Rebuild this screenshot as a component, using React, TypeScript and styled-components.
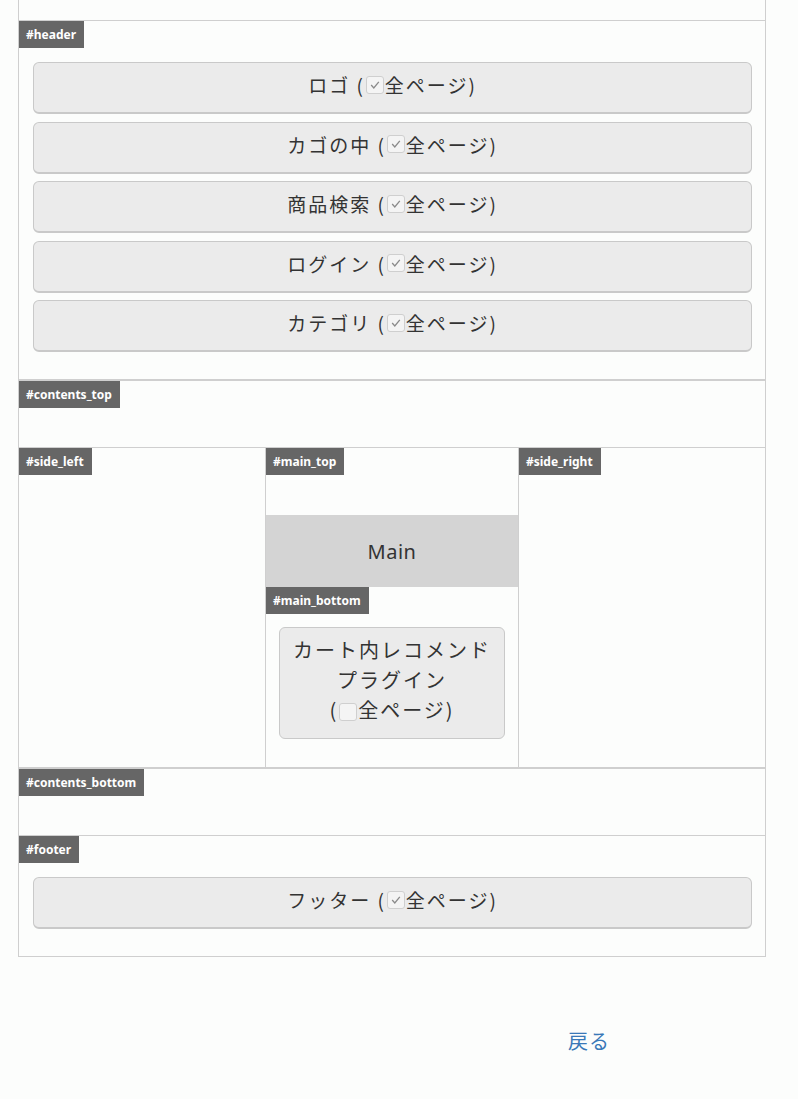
import React from "react";
import styled, { createGlobalStyle } from "styled-components";

const GlobalStyle = createGlobalStyle`
  body {
    margin: 0;
    background: #fcfdfc;
    font-family: "Noto Sans CJK JP", "Noto Sans", sans-serif;
    color: #333;
  }
`;

type Block = { name: string; all: boolean };

const headerBlocks: Block[] = [
  { name: "ロゴ", all: true },
  { name: "カゴの中", all: true },
  { name: "商品検索", all: true },
  { name: "ログイン", all: true },
  { name: "カテゴリ", all: true },
];

const Check: React.FC<{ checked: boolean }> = ({ checked }) => (
  <CheckBox>
    {checked && (
      <svg width="12" height="12" viewBox="0 0 12 12">
        <path d="M2.2 6 L4.8 9 L9.8 2.8" fill="none" stroke="#8a8a8a" strokeWidth="1.3" />
      </svg>
    )}
  </CheckBox>
);

const BlockItem: React.FC<{ block: Block }> = ({ block }) => (
  <BlockButton>
    {block.name} (<Check checked={block.all} />全ページ)
  </BlockButton>
);

const App: React.FC = () => {
  return (
    <>
      <GlobalStyle />
      <Layout>
        <TopRest />
        <Section $thick>
          <Label>#header</Label>
          <BlockList>
            {headerBlocks.map((b) => (
              <BlockItem key={b.name} block={b} />
            ))}
          </BlockList>
        </Section>
        <Section $empty>
          <Label>#contents_top</Label>
        </Section>
        <Columns>
          <Column>
            <Label>#side_left</Label>
          </Column>
          <Column $main>
            <Label>#main_top</Label>
            <MainSpacer />
            <MainBlock>Main</MainBlock>
            <Label>#main_bottom</Label>
            <SmallList>
              <BlockButton $small>
                カート内レコメンドプラグイン
                <br />(<Check checked={false} />全ページ)
              </BlockButton>
            </SmallList>
          </Column>
          <Column>
            <Label>#side_right</Label>
          </Column>
        </Columns>
        <Section $empty>
          <Label>#contents_bottom</Label>
        </Section>
        <Section $last>
          <Label>#footer</Label>
          <BlockList>
            <BlockItem block={{ name: "フッター", all: true }} />
          </BlockList>
        </Section>
      </Layout>
      <BackRow>
        <BackLink href="#">戻る</BackLink>
      </BackRow>
    </>
  );
};

export default App;

const Layout = styled.div`
  margin-left: 18px;
  width: 748px;
  border-left: 1px solid #cfcfcf;
  border-right: 1px solid #cfcfcf;
  border-bottom: 1px solid #cfcfcf;
  box-sizing: border-box;
`;

const TopRest = styled.div`
  height: 20px;
  border-bottom: 1px solid #cfcfcf;
`;

const Section = styled.div<{ $thick?: boolean; $empty?: boolean; $last?: boolean }>`
  border-bottom: ${(p) => (p.$thick ? "2px" : p.$last ? "0" : "1px")} solid #cfcfcf;
  min-height: ${(p) => (p.$empty ? "66px" : "0")};
`;

const Label = styled.div`
  display: inline-block;
  vertical-align: top;
  height: 27px;
  line-height: 27px;
  padding: 0 8px 0 7px;
  background: #666;
  color: #fff;
  font-family: "Noto Sans", sans-serif;
  font-size: 12px;
  font-weight: 700;
`;

const BlockList = styled.div`
  display: flex;
  flex-direction: column;
  gap: 7.5px;
  padding: 14px 13px 27px 14px;
`;

const BlockButton = styled.div<{ $small?: boolean }>`
  box-sizing: border-box;
  min-height: 52px;
  padding-bottom: 6px;
  display: flex;
  align-items: center;
  justify-content: center;
  flex-wrap: wrap;
  background: #ebebeb;
  border: 1px solid #c9c9c9;
  border-bottom-width: 2px;
  border-radius: 6px;
  font-size: 19px;
  letter-spacing: 2px;
  color: #333;
  text-align: center;
  ${(p) =>
    p.$small &&
    `
    display: block;
    min-height: 112px;
    padding: 7px 10px 4px;
    font-size: 20px;
    line-height: 30px;
    border-bottom-width: 1px;
    letter-spacing: 2px;
  `}
`;

const CheckBox = styled.span`
  display: inline-flex;
  align-items: center;
  justify-content: center;
  width: 16px;
  height: 16px;
  margin: 0 1px 0 1px;
  vertical-align: -3px;
  background: #f4f4f4;
  border: 1px solid #cfcfcf;
  border-radius: 3px;
`;

const Columns = styled.div`
  display: grid;
  grid-template-columns: 246px 1fr 246px;
  min-height: 319px;
  border-bottom: 2px solid #cfcfcf;
`;

const Column = styled.div<{ $main?: boolean }>`
  display: flex;
  flex-direction: column;
  align-items: flex-start;
  border-left: ${(p) => (p.$main ? "1px solid #cfcfcf" : "0")};
  border-right: ${(p) => (p.$main ? "1px solid #cfcfcf" : "0")};
`;

const MainSpacer = styled.div`
  height: 40px;
`;

const MainBlock = styled.div`
  align-self: stretch;
  height: 72px;
  display: flex;
  align-items: center;
  justify-content: center;
  background: #d4d4d4;
  font-family: "Noto Sans", sans-serif;
  font-size: 20px;
  color: #333;
  letter-spacing: 0.5px;
`;

const SmallList = styled.div`
  align-self: stretch;
  padding: 13px 13px 27px 13px;
`;

const BackRow = styled.div`
  padding: 69px 0 0 568px;
`;

const BackLink = styled.a`
  font-size: 20px;
  letter-spacing: 1px;
  color: #3a78b8;
  text-decoration: none;
`;
